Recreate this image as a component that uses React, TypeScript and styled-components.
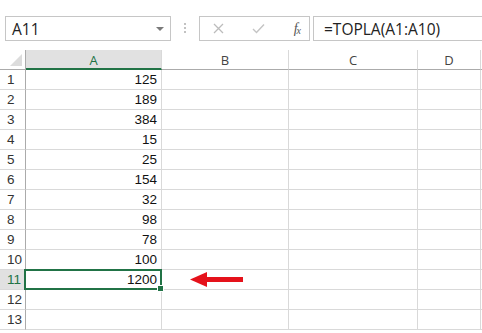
import React from "react";
import styled, { createGlobalStyle, css } from "styled-components";

const GlobalStyle = createGlobalStyle`
  html, body {
    margin: 0;
    padding: 0;
    background: #ffffff;
  }
  body {
    font-family: "Liberation Sans", Arial, sans-serif;
  }
`;

const GREEN = "#217346";
const GRID = "#d9d9d9";
const HEAD_LINE = "#ababab";

const Page = styled.div`
  width: 482px;
  height: 333px;
  overflow: hidden;
  background: #fff;
`;

const FormulaBar = styled.div`
  display: flex;
  align-items: flex-start;
  height: 50px;
  box-sizing: border-box;
  padding: 16px 0 0 5px;
  overflow: hidden;
  & > * {
    flex-shrink: 0;
  }
`;

const NameBox = styled.div`
  width: 166px;
  height: 25px;
  box-sizing: border-box;
  border: 1px solid #c6c6c6;
  display: flex;
  align-items: center;
  padding-left: 6px;
  font-family: "Open Sans", "Noto Sans", sans-serif;
  font-size: 15.5px;
  color: #222;
`;

const DropArrow = styled.span`
  margin-left: auto;
  margin-right: 6px;
  width: 0;
  height: 0;
  border-left: 4px solid transparent;
  border-right: 4px solid transparent;
  border-top: 4px solid #7a7a7a;
`;

const Dots = styled.div`
  display: flex;
  flex-direction: column;
  gap: 2px;
  margin: 7px 13px 0 13px;
  span {
    width: 2px;
    height: 2px;
    background: #c2c2c2;
  }
`;

const ButtonBox = styled.div`
  width: 111px;
  height: 25px;
  box-sizing: border-box;
  border: 1px solid #c6c6c6;
  display: flex;
  align-items: center;
  justify-content: space-between;
  padding: 0 9px 0 13px;
`;

const FxLabel = styled.span`
  font-family: "Liberation Serif", "Times New Roman", serif;
  font-style: italic;
  font-size: 14px;
  color: #555;
  letter-spacing: -1px;
  sub {
    font-size: 10px;
    vertical-align: -1px;
  }
`;

const FormulaInput = styled.div`
  width: 200px;
  margin-left: 3px;
  height: 25px;
  box-sizing: border-box;
  border: 1px solid #c6c6c6;
  display: flex;
  align-items: center;
  padding-left: 10px;
  font-family: "Open Sans", "Noto Sans", sans-serif;
  font-size: 15.5px;
  color: #222;
  white-space: nowrap;
`;

const Sheet = styled.div`
  display: grid;
  grid-template-columns: 26px 136px 127px 129px 63px 20px;
  grid-auto-rows: 20px;
`;

const Corner = styled.div`
  position: relative;
  box-sizing: border-box;
  border-right: 1px solid ${HEAD_LINE};
  border-bottom: 1px solid ${HEAD_LINE};
  &::after {
    content: "";
    position: absolute;
    right: 3px;
    bottom: 3px;
    width: 0;
    height: 0;
    border-left: 12px solid transparent;
    border-bottom: 12px solid #dcdcdc;
  }
`;

const ColHead = styled.div<{ $active?: boolean }>`
  box-sizing: border-box;
  display: flex;
  align-items: center;
  justify-content: center;
  border-right: 1px solid ${GRID};
  border-bottom: 1px solid ${HEAD_LINE};
  font-family: "Open Sans", "Noto Sans", sans-serif;
  font-size: 13px;
  color: #444;
  padding-top: 1px;
  ${(p) =>
    p.$active &&
    css`
      background: #e1e1e1;
      color: ${GREEN};
      border-bottom: 2px solid ${GREEN};
    `}
`;

const RowHead = styled.div<{ $active?: boolean }>`
  box-sizing: border-box;
  display: flex;
  align-items: center;
  padding-left: 7px;
  border-right: 1px solid ${HEAD_LINE};
  border-bottom: 1px solid ${GRID};
  font-family: "Liberation Sans", Arial, sans-serif;
  font-size: 13.5px;
  color: #333;
  ${(p) =>
    p.$active &&
    css`
      background: #e1e1e1;
      color: ${GREEN};
    `}
`;

const Cell = styled.div<{ $selected?: boolean }>`
  position: relative;
  box-sizing: border-box;
  display: flex;
  align-items: center;
  justify-content: flex-end;
  padding-right: 4px;
  border-right: 1px solid ${GRID};
  border-bottom: 1px solid ${GRID};
  font-family: "Liberation Sans", Arial, sans-serif;
  font-size: 13.5px;
  color: #111;
  ${(p) =>
    p.$selected &&
    css`
      &::after {
        content: "";
        position: absolute;
        top: -1px;
        left: -2px;
        right: -1px;
        bottom: -1px;
        border: 2px solid ${GREEN};
      }
      &::before {
        content: "";
        position: absolute;
        right: -3px;
        bottom: -3px;
        width: 5px;
        height: 5px;
        background: ${GREEN};
        border: 1px solid #fff;
        z-index: 1;
      }
    `}
`;

const ArrowCell = styled(Cell)`
  justify-content: flex-start;
  padding-left: 28px;
`;

const CrossIcon = () => (
  <svg width="11" height="11" viewBox="0 0 11 11">
    <path d="M1 1 L10 10 M10 1 L1 10" stroke="#bcbcbc" strokeWidth="1.3" fill="none" />
  </svg>
);

const CheckIcon = () => (
  <svg width="13" height="11" viewBox="0 0 13 11">
    <path d="M1 6 L4.5 9.5 L12 1.5" stroke="#c4c4c4" strokeWidth="1.4" fill="none" />
  </svg>
);

const RedArrow = () => (
  <svg width="53" height="15" viewBox="0 0 53 15">
    <polygon points="0,7.5 17,0 17,15" fill="#e5121b" />
    <rect x="16" y="5" width="37" height="5" fill="#e5121b" />
  </svg>
);

const values = [125, 189, 384, 15, 25, 154, 32, 98, 78, 100, 1200];
const totalRows = 13;

export default function App() {
  const rows = Array.from({ length: totalRows }, (_, i) => i + 1);
  return (
    <Page>
      <GlobalStyle />
      <FormulaBar>
        <NameBox>
          A11
          <DropArrow />
        </NameBox>
        <Dots>
          <span />
          <span />
          <span />
        </Dots>
        <ButtonBox>
          <CrossIcon />
          <CheckIcon />
          <FxLabel>
            f<sub>x</sub>
          </FxLabel>
        </ButtonBox>
        <FormulaInput>=TOPLA(A1:A10)</FormulaInput>
      </FormulaBar>
      <Sheet>
        <Corner />
        <ColHead $active>A</ColHead>
        <ColHead>B</ColHead>
        <ColHead>C</ColHead>
        <ColHead>D</ColHead>
        <ColHead />
        {rows.map((r) => (
          <React.Fragment key={r}>
            <RowHead $active={r === 11}>{r}</RowHead>
            <Cell $selected={r === 11}>{values[r - 1] ?? ""}</Cell>
            {r === 11 ? (
              <ArrowCell>
                <RedArrow />
              </ArrowCell>
            ) : (
              <Cell />
            )}
            <Cell />
            <Cell />
            <Cell />
          </React.Fragment>
        ))}
      </Sheet>
    </Page>
  );
}
